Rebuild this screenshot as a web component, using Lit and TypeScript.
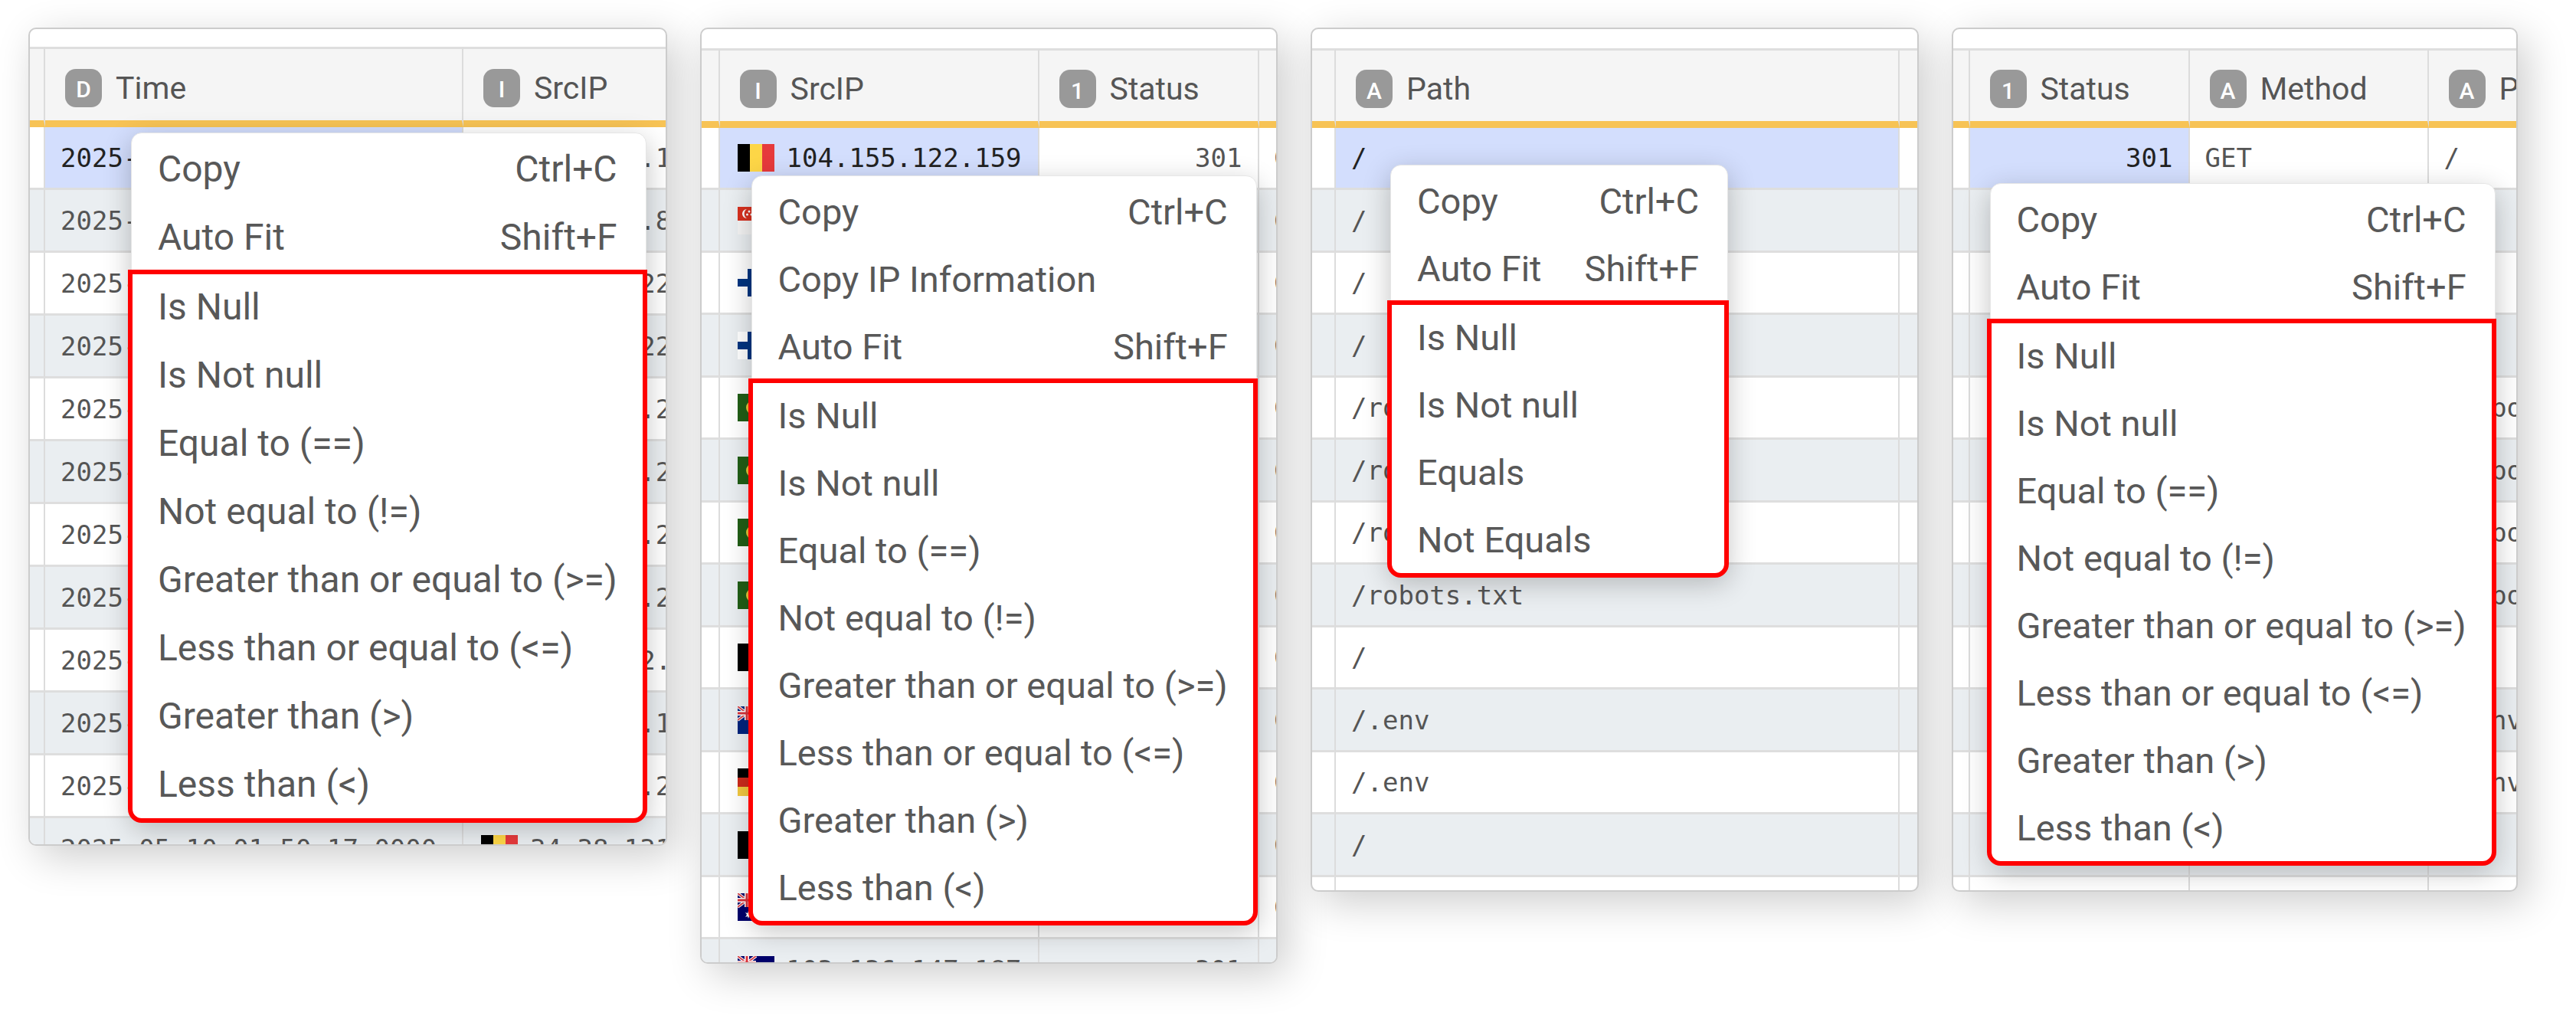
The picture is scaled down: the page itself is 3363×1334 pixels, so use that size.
import { LitElement, html, svg, css, nothing } from "lit";
import { customElement, property } from "lit/decorators.js";
import { classMap } from "lit/directives/class-map.js";

type Flag = "be" | "sg" | "fi" | "mo" | "ke" | "nz" | "de" | "au";
interface Column { badge?: string; label?: string; width?: number; kind?: "text" | "number" | "ip"; }
interface Cell { text: string; flag?: Flag; }
interface MenuItem { label: string; keys?: string; }
interface Panel {
  id: string;
  columns: Column[];
  rows: (Cell | string)[][];
  selected: number;
  actions: MenuItem[];
  filters: string[];
}

const COPY: MenuItem = { label: "Copy", keys: "Ctrl+C" };
const FIT: MenuItem = { label: "Auto Fit", keys: "Shift+F" };
const COMPARE = [
  "Is Null", "Is Not null", "Equal to (==)", "Not equal to (!=)",
  "Greater than or equal to (>=)", "Less than or equal to (<=)",
  "Greater than (>)", "Less than (<)",
];
const PATHS = ["/", "/", "/", "/", "/robots.txt", "/robots.txt", "/robots.txt", "/robots.txt", "/", "/.env", "/.env", "/", ""];

const ip = (flag: Flag, text: string): Cell => ({ flag, text });

const SOURCES: Cell[] = [
  ip("be", "104.155.122.159"), ip("sg", "118.193.84.12"), ip("fi", "65.108.220.14"), ip("fi", "65.109.228.31"),
  ip("mo", "113.152.208.1"), ip("mo", "113.152.208.1"), ip("mo", "113.152.208.1"), ip("mo", "113.152.208.1"),
  ip("ke", "77.101.2.50"), ip("nz", "103.136.147.12"), ip("de", "167.235.24.18"),
];
const TIMES: Cell[] = [...SOURCES, ip("be", "34.38.131.56")];
const IPS: Cell[] = [...SOURCES, ip("ke", "77.101.2.50"), ip("au", "103.136.147.187"), ip("au", "103.136.147.187")];

const PANELS: Panel[] = [
  {
    id: "time",
    columns: [{ width: 20 }, { badge: "D", label: "Time", width: 546 }, { badge: "I", label: "SrcIP", kind: "ip" }],
    rows: TIMES.map((c) => ["", "2025-05-10 01:50:17.0000", c]),
    selected: 1,
    actions: [COPY, FIT],
    filters: COMPARE,
  },
  {
    id: "srcip",
    columns: [{ width: 24 }, { badge: "I", label: "SrcIP", kind: "ip", width: 417 }, { badge: "1", label: "Status", kind: "number", width: 287 }, {}],
    rows: IPS.map((c) => ["", c, "301", "GET"]),
    selected: 1,
    actions: [COPY, { label: "Copy IP Information" }, FIT],
    filters: COMPARE,
  },
  {
    id: "path",
    columns: [{ width: 31 }, { badge: "A", label: "Path" }, { width: 23 }],
    rows: PATHS.map((p) => ["", p, ""]),
    selected: 1,
    actions: [COPY, FIT],
    filters: ["Is Null", "Is Not null", "Equals", "Not Equals"],
  },
  {
    id: "status",
    columns: [{ width: 22 }, { badge: "1", label: "Status", kind: "number", width: 287 }, { badge: "A", label: "Method", width: 312 }, { badge: "A", label: "Path" }],
    rows: PATHS.map((p, i) => ["", i < 12 ? "301" : "", i < 12 ? "GET" : "", p]),
    selected: 1,
    actions: [COPY, FIT],
    filters: COMPARE,
  },
];

const unionJack = svg`
  <path d="M0 0L24 18M24 0L0 18" stroke="#fff" stroke-width="4"/>
  <path d="M0 0L24 18M24 0L0 18" stroke="#d8474d" stroke-width="2"/>
  <path d="M12 0V18M0 9H24" stroke="#fff" stroke-width="6"/>
  <path d="M12 0V18M0 9H24" stroke="#d8333b" stroke-width="3"/>`;

const FLAGS = {
  be: svg`<path fill="#000" d="M0 0h16v36H0z"/><path fill="#fdd647" d="M16 0h16v36H16z"/><path fill="#e63a3c" d="M32 0h16v36H32z"/>`,
  sg: svg`<path fill="#f4f4f4" d="M0 0h48v36H0z"/><path fill="#d8301f" d="M0 0h48v18H0z"/><path fill="#fff" d="M12 3a6 6 0 1 0 0 12a7 7 0 0 1 0-12z"/><circle cx="15" cy="6" r="1.5" fill="#fff"/><circle cx="12.5" cy="10" r="1.5" fill="#fff"/><circle cx="18" cy="10" r="1.5" fill="#fff"/>`,
  fi: svg`<path fill="#fff" d="M0 0h48v36H0z"/><path fill="#003580" d="M0 13h48v10H0zM13 0h10v36H13z"/>`,
  mo: svg`<path fill="#215e16" d="M0 0h48v36H0z"/><circle cx="20" cy="18" r="9" fill="#e3c53a"/><circle cx="22" cy="18" r="6" fill="#215e16"/>`,
  ke: svg`<path fill="#000" d="M0 0h48v36H0z"/>`,
  nz: svg`<path fill="#00247d" d="M0 0h48v36H0z"/>${unionJack}`,
  de: svg`<path fill="#000" d="M0 0h48v12H0z"/><path fill="#cc2a1c" d="M0 12h48v12H0z"/><path fill="#f2c840" d="M0 24h48v12H0z"/>`,
  au: svg`<path fill="#00006b" d="M0 0h48v36H0z"/>${unionJack}<path fill="#fff" d="M14 23l1 3 3-1-2 3 2 3-3-1-1 3-1-3-3 1 2-3-2-3 3 1z"/>`,
};

@customElement("context-menu")
export class ContextMenu extends LitElement {
  @property({ attribute: false }) actions: MenuItem[] = [];
  @property({ attribute: false }) filters: string[] = [];

  static styles = css`
    :host {
      display: block;
      padding: 2px 0;
      background: #fff;
      border: 1px solid #e6e6e6;
      border-radius: 14px;
      box-shadow: 0 10px 36px rgba(0, 0, 0, 0.24);
      font-family: Roboto, "Liberation Sans", sans-serif;
    }
    .group { position: relative; display: flex; flex-direction: column; }
    .filters { margin-top: 2px; }
    .filters::after {
      content: "";
      position: absolute;
      inset: -4px -2px -6px -5px;
      border: 6px solid #f00;
      border-radius: 0 0 18px 18px;
      pointer-events: none;
    }
    .item {
      display: flex;
      align-items: center;
      justify-content: space-between;
      gap: 56px;
      height: var(--item-height, 88px);
      padding: 0 37px 0 34px;
      border: 0;
      background: none;
      color: #585858;
      font: inherit;
      font-size: var(--item-size, 47px);
      white-space: nowrap;
      text-align: left;
    }
  `;

  render() {
    return html`
      <div class="group">
        ${this.actions.map((a) => html`<button class="item" type="button"><span>${a.label}</span>${a.keys ? html`<span>${a.keys}</span>` : nothing}</button>`)}
      </div>
      <div class="group filters">
        ${this.filters.map((f) => html`<button class="item" type="button">${f}</button>`)}
      </div>`;
  }
}

@customElement("data-grid")
export class DataGrid extends LitElement {
  @property({ attribute: false }) panel!: Panel;

  static styles = css`
    :host { display: block; color: #555; }
    .grid { width: 100%; table-layout: fixed; border-collapse: separate; border-spacing: 0; }
    .head {
      box-sizing: border-box;
      height: var(--head-height, 104px);
      padding: 0 0 0 26px;
      background: #f5f5f5;
      border-top: 3px solid #dedede;
      border-bottom: 9px solid #f7c355;
      overflow: hidden;
    }
    .line { border-right: 2px solid #dcdcdc; }
    .title {
      display: flex;
      align-items: center;
      gap: 18px;
      padding-top: 8px;
      font: 400 41px Roboto, "Liberation Sans", sans-serif;
      white-space: nowrap;
    }
    .badge {
      display: grid;
      place-items: center;
      flex: none;
      box-sizing: border-box;
      width: 48px;
      height: 50px;
      padding-top: 4px;
      border-radius: 14px;
      background: #999;
      color: #fff;
      font-size: 30px;
      font-weight: 500;
    }
    .row { height: var(--row-odd, 81px); }
    .row:nth-child(even) { height: 82px; background: #eaeef1; }
    .cell {
      box-sizing: border-box;
      padding: 0 20px;
      border-bottom: 3px solid #dedede;
      font: 400 34px "DejaVu Sans Mono", monospace;
      white-space: nowrap;
      overflow: hidden;
    }
    .number { text-align: right; }
    .selected { background: #d3defd; color: #222; }
    .value { display: flex; align-items: center; gap: 16px; padding-left: 3px; }
    .flag { flex: none; width: 48px; height: 36px; }
  `;

  private cell(value: Cell | string) {
    if (typeof value === "string") return value;
    return html`<span class="value">
      <svg class="flag" viewBox="0 0 48 36" aria-hidden="true">${FLAGS[value.flag!]}</svg>${value.text}
    </span>`;
  }

  render() {
    const { columns, rows, selected } = this.panel;
    const last = columns.length - 1;
    return html`
      <table class="grid">
        <colgroup>
          ${columns.map((c) => html`<col style=${c.width ? `width:${c.width}px` : ""}>`)}
        </colgroup>
        <thead>
          <tr>
            ${columns.map((c, i) => html`<th class=${classMap({ head: true, line: i < last })}>
              ${c.label ? html`<span class="title"><span class="badge">${c.badge}</span>${c.label}</span>` : nothing}
            </th>`)}
          </tr>
        </thead>
        <tbody>
          ${rows.map((r, ri) => html`<tr class="row">
            ${r.map((v, i) => html`<td class=${classMap({
              cell: true,
              line: i < last,
              number: columns[i].kind === "number",
              selected: ri === 0 && i === selected,
            })}>${this.cell(v)}</td>`)}
          </tr>`)}
        </tbody>
      </table>`;
  }
}

@customElement("app-root")
export class AppRoot extends LitElement {
  static styles = css`
    :host { display: block; background: #fff; }
    .board {
      display: grid;
      grid-template-columns: minmax(0, 833fr) minmax(0, 754fr) minmax(0, 793fr) minmax(0, 739fr);
      align-items: start;
      gap: 43px;
      padding: 36px 76px 76px 37px;
    }
    .panel {
      position: relative;
      box-sizing: border-box;
      padding-top: 25px;
      border: 2px solid #ccc;
      border-radius: 10px;
      background: #fff;
      box-shadow: 12px 14px 54px rgba(0, 0, 0, 0.2);
      overflow: hidden;
    }
    .menu { position: absolute; }
    .time { height: 1068px; padding-top: 23px; --head-height: 105px; --row-odd: 82px; --item-height: 89px; --item-size: 48px; }
    .srcip { height: 1222px; }
    .path { height: 1128px; }
    .status { height: 1128px; }
    .time .menu { left: 132px; top: 135px; }
    .srcip .menu { left: 65px; top: 191px; }
    .path .menu { left: 102px; top: 177px; }
    .status .menu { left: 48px; top: 201px; }
  `;

  render() {
    return html`<main class="board">
      ${PANELS.map((p) => html`<section class="panel ${p.id}">
        <data-grid .panel=${p}></data-grid>
        <context-menu class="menu" .actions=${p.actions} .filters=${p.filters}></context-menu>
      </section>`)}
    </main>`;
  }
}
